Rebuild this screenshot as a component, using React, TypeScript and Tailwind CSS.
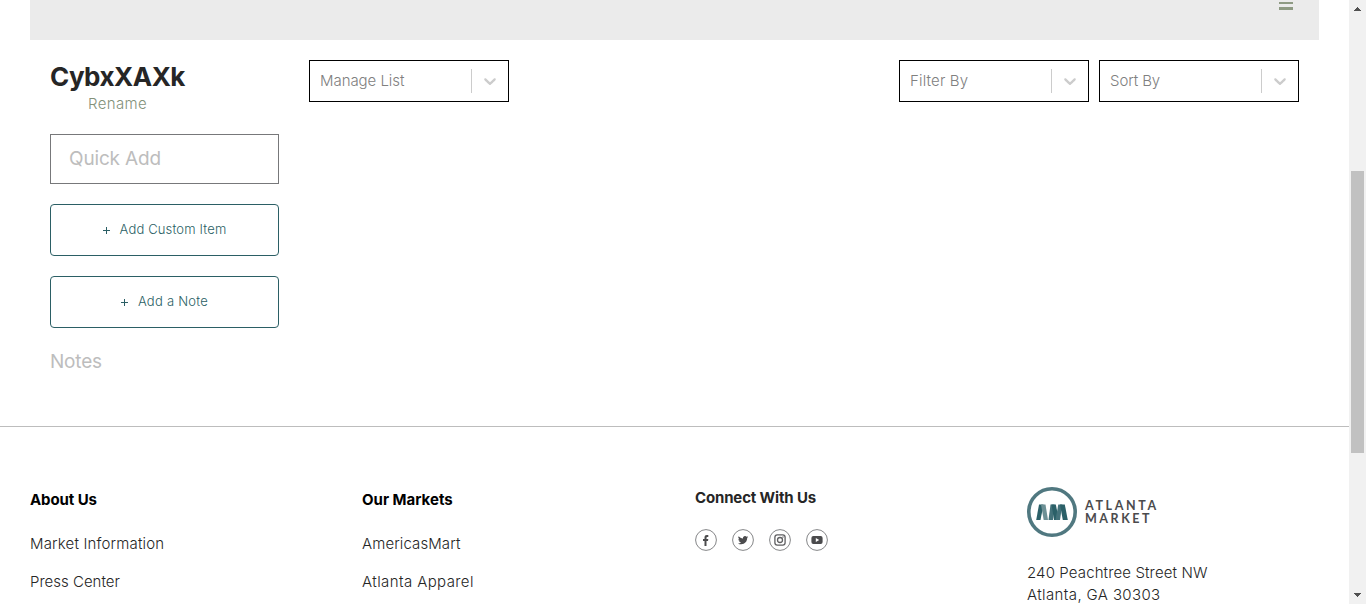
import type { ReactNode } from 'react';

function Select({ label, width, tracking }: { label: string; width: string; tracking: string }) {
  return (
    <div className={`flex h-[42px] items-center border border-black bg-white ${width}`}>
      <span className={`flex-1 whitespace-nowrap pl-[10px] text-[15px] leading-5 text-[#808080] ${tracking}`}>{label}</span>
      <span className="h-6 w-px bg-[#cccccc]" />
      <span className="flex w-9 items-center justify-center">
        <svg width="20" height="20" viewBox="0 0 20 20" fill="#cccccc">
          <path d="M4.516 7.548c0.436-0.446 1.043-0.481 1.576 0l3.908 3.747 3.908-3.747c0.533-0.481 1.141-0.446 1.574 0 0.436 0.445 0.408 1.197 0 1.615-0.406 0.418-4.695 4.502-4.695 4.502-0.217 0.223-0.502 0.335-0.787 0.335s-0.57-0.112-0.789-0.335c0 0-4.287-4.084-4.695-4.502s-0.436-1.17 0-1.615z" />
        </svg>
      </span>
    </div>
  );
}

function OutlineButton({ label, tracking }: { label: string; tracking: string }) {
  return (
    <button className="flex h-[52px] w-full items-center justify-center rounded-[4px] border border-[#2b5f65] text-[13px] text-[#2b5f65]">
      <svg className="mr-[10px]" width="7" height="7" viewBox="0 0 7 7" stroke="#2b5f65" shapeRendering="crispEdges">
        <path d="M0 3.5h7M3.500 0v7" />
      </svg>
      <span className={tracking}>{label}</span>
    </button>
  );
}

function Social({ children }: { children: ReactNode }) {
  return (
    <svg width="22" height="22" viewBox="0 0 22 22" fill="none">
      <circle cx="11" cy="11" r="10.4" stroke="#77787a" strokeWidth="0.9" />
      {children}
    </svg>
  );
}

function Logo() {
  return (
    <div className="flex h-[50px] items-center">
      <svg width="50" height="50" viewBox="0 0 50 50" fill="none">
        <circle cx="25" cy="25" r="23.2" stroke="#507880" strokeWidth="3.6" />
        <path d="M12 17.500h4.500L13.500 33H9.200z" fill="#2b6068" />
        <path d="M14 17.500h4.500L21 33h-4.300z" fill="#6d9095" />
        <path d="M23.500 17.500h4L26 33H21.500z" fill="#44727a" />
        <path d="M24.500 17.500h4.300L32 33h-5z" fill="#2b6068" />
        <path d="M31.300 17.500h4L33 33h-4.500z" fill="#44727a" />
        <path d="M33 17.500h4.800L40.800 33h-5z" fill="#2b6068" />
      </svg>
      <div className="ml-[8px] flex flex-col font-['Lato'] text-[12.5px] font-bold leading-[13px] text-[#4b4b4d]">
        <span className="tracking-[2.65px]">ATLANTA</span>
        <span className="tracking-[2.55px]">MARKET</span>
      </div>
    </div>
  );
}

export default function App() {
  return (
    <div className="flex h-[604px] w-full overflow-hidden bg-white font-['Inter',sans-serif] font-light text-[#262626]">
      <div className="flex min-w-0 flex-1 flex-col">
        <header className="ml-[30px] mr-[30px] flex h-10 shrink-0 justify-end bg-[#ebebeb] pr-[26px] pt-[2px]">
          <div className="flex w-[14px] flex-col gap-[3px]">
            <span className="h-[2px] bg-[#8e9a83]" />
            <span className="h-[3px] bg-[#8e9a83]" />
          </div>
        </header>

        <main className="flex h-[386px] shrink-0 px-[50px] pt-5">
          <aside className="flex w-[229px] flex-col">
            <h1 className="h-[34px] whitespace-nowrap text-[26px] font-bold leading-[34px] tracking-[-0.5px]">CybxXAXk</h1>
            <a className="ml-[38px] h-5 text-[15px] leading-5 tracking-[0.35px] text-[#83917a]">Rename</a>
            <div className="mt-5 flex h-[50px] items-center border border-[#77787a] pl-[18px] text-[19px] font-normal text-[#bdbdbd]">
              <span className="tracking-[-0.15px]">Quick Add</span>
            </div>
            <div className="mt-5 flex flex-col gap-5">
              <OutlineButton label="Add Custom Item" tracking="tracking-[0.15px]" />
              <OutlineButton label="Add a Note" tracking="tracking-[0.25px]" />
            </div>
            <h2 className="mt-5 text-[19px] font-normal leading-[28px] tracking-[-0.2px] text-[#bdbdbd]">Notes</h2>
          </aside>
          <section className="ml-[30px] flex flex-1 items-start">
            <Select label="Manage List" width="w-[200px]" tracking="tracking-[-0.05px]" />
            <div className="ml-auto flex gap-[10px]">
              <Select label="Filter By" width="w-[190px]" tracking="tracking-[0.15px]" />
              <Select label="Sort By" width="w-[200px]" tracking="tracking-[-0.1px]" />
            </div>
          </section>
        </main>

        <footer className="grid flex-1 grid-cols-[332px_333px_332px_1fr] border-t border-[#bdbdbd] pl-[30px] text-[15px] leading-[22px]">
          <div className="pt-[62px]">
            <h3 className="font-bold tracking-[-0.1px] text-black">About Us</h3>
            <p className="mt-[22px] tracking-[0.17px]">Market Information</p>
            <p className="mt-4">Press Center</p>
          </div>
          <div className="pt-[62px]">
            <h3 className="font-bold text-black">Our Markets</h3>
            <p className="mt-[22px] tracking-[0.1px]">AmericasMart</p>
            <p className="mt-4 tracking-[0.4px]">Atlanta Apparel</p>
          </div>
          <div className="pt-[60px]">
            <h3 className="font-bold tracking-[-0.15px]">Connect With Us</h3>
            <div className="mt-5 flex gap-[15px]">
              <Social>
                <path d="M9.5 17v-5H8v-2h1.5V8.500c0-1.700.9-2.500 2.400-2.500h1.400v2h-1c-.6 0-.8.3-.8.8V10h1.800l-.3 2h-1.500v5z" fill="#4b4b4d" />
              </Social>
              <Social>
                <path transform="translate(5.9 6) scale(.43)" d="M23.950 4.570a10 10 0 0 1-2.820.770 4.960 4.960 0 0 0 2.160-2.720c-.95.550-2 .950-3.130 1.180a4.920 4.920 0 0 0-8.380 4.480C7.690 8.090 4.070 6.130 1.640 3.160a4.920 4.920 0 0 0 1.520 6.570 4.900 4.900 0 0 1-2.230-.620v.060a4.920 4.920 0 0 0 3.950 4.830 5 5 0 0 1-2.210.080 4.940 4.940 0 0 0 4.600 3.420A9.870 9.870 0 0 1 0 19.540a13.990 13.990 0 0 0 7.550 2.210c9.050 0 14-7.500 14-13.980 0-.210 0-.420-.020-.630a9.940 9.940 0 0 0 2.460-2.550z" fill="#4b4b4d" />
              </Social>
              <Social>
                <rect x="5.900" y="5.900" width="10.200" height="10.200" rx="2.400" stroke="#5f5f61" strokeWidth="1.300" />
                <circle cx="11" cy="11" r="2.500" stroke="#5f5f61" strokeWidth="1.300" />
                <circle cx="14" cy="8" r=".7" fill="#5f5f61" />
              </Social>
              <Social>
                <rect x="5.400" y="7" width="11.200" height="8" rx="2" fill="#4b4b4d" />
                <path d="M9.800 9v4l3.400-2z" fill="white" />
              </Social>
            </div>
          </div>
          <div className="pt-[60px]">
            <Logo />
            <p className="mt-[25px] whitespace-nowrap tracking-[0.12px]">240 Peachtree Street NW</p>
            <p className="whitespace-nowrap tracking-[0.38px]">Atlanta, GA 30303</p>
          </div>
        </footer>
      </div>

      <div className="flex w-[17px] shrink-0 flex-col items-center bg-[#f1f1f1]">
        <svg className="shrink-0" width="17" height="17" viewBox="0 0 17 17" shapeRendering="crispEdges">
          <path d="M5 11h7L8.500 7z" fill="#505050" />
        </svg>
        <div className="mt-[154px] h-[282px] w-[13px] bg-[#c1c1c1]" />
        <svg className="mt-auto shrink-0" width="17" height="17" viewBox="0 0 17 17" shapeRendering="crispEdges">
          <path d="M5 6h7l-3.500 4z" fill="#505050" />
        </svg>
      </div>
    </div>
  );
}
